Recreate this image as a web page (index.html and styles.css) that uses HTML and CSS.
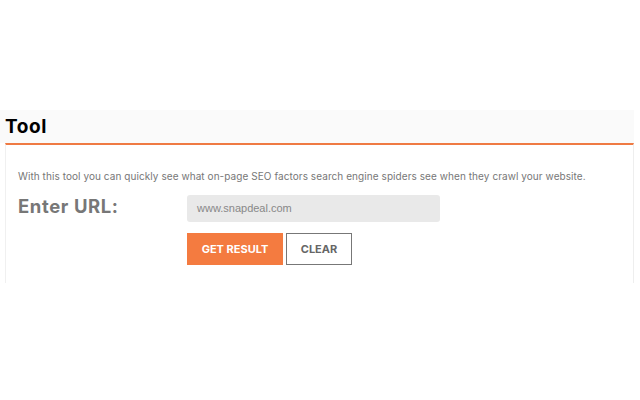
FILE: index.html
```html
<!DOCTYPE html>
<html>
<head>
<meta charset="utf-8">
<link rel="stylesheet" href="styles.css">
</head>
<body>
<div class="wrap">
  <div class="head"><h1 class="title">Tool</h1></div>
  <div class="panel">
    <p class="desc">With this tool you can quickly see what on-page SEO factors search engine spiders see when they crawl your website.</p>
    <div class="row">
      <label class="label">Enter URL:</label>
      <div class="field">
        <div class="input">www.snapdeal.com</div>
        <div class="buttons">
          <button class="btn primary">GET RESULT</button>
          <button class="btn secondary">CLEAR</button>
        </div>
      </div>
    </div>
  </div>
</div>
</body>
</html>
```

FILE: styles.css
```css
html, body {
  margin: 0;
  padding: 0;
  background: #ffffff;
}
body {
  width: 640px;
  height: 400px;
  overflow: hidden;
  font-family: "Inter", "Liberation Sans", sans-serif;
}
.wrap {
  padding-top: 110px;
}
.head {
  background: #fafafa;
  margin-right: 6px;
  height: 33px;
  padding-left: 5px;
  display: flex;
  align-items: center;
}
.title {
  margin: 0;
  font-size: 19px;
  font-weight: 700;
  color: #000;
  letter-spacing: 0.6px;
}
.panel {
  margin: 0 6px 0 5px;
  border-top: 2px solid #ef7a43;
  border-left: 1px solid #f0f0f0;
  border-right: 1px solid #eeeeee;
  height: 138px;
  padding: 0 12px;
}
.desc {
  margin: 25px 0 0;
  font-size: 10px;
  color: #777;
  line-height: 12px;
  letter-spacing: 0.07px;
}
.row {
  display: flex;
  margin-top: 13px;
}
.label {
  width: 169px;
  font-size: 18.5px;
  font-weight: 700;
  color: #777;
  line-height: 22px;
  letter-spacing: 0.6px;
}
.field {
  display: flex;
  flex-direction: column;
}
.input {
  width: 243px;
  height: 27px;
  background: #e9e9e9;
  border-radius: 3px;
  padding-left: 10px;
  box-sizing: content-box;
  font-family: "Liberation Sans", Arial, sans-serif;
  font-size: 11px;
  color: #888;
  line-height: 27px;
}
.buttons {
  display: flex;
  gap: 3px;
  margin-top: 11px;
}
.btn {
  height: 32px;
  font-family: "Inter", "Liberation Sans", sans-serif;
  font-size: 11px;
  font-weight: 700;
  padding: 0;
  cursor: pointer;
}
.primary {
  width: 96px;
  background: #f47b40;
  color: #fff;
  border: none;
}
.secondary {
  width: 66px;
  background: #fff;
  color: #666;
  border: 1px solid #777;
}
```
